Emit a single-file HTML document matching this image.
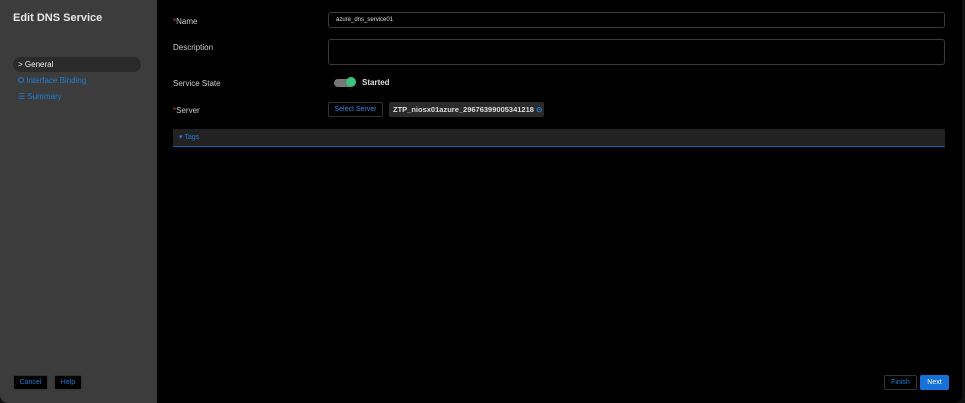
<!DOCTYPE html>
<html><head><meta charset="utf-8"><style>
*{box-sizing:border-box;margin:0;padding:0}
body{width:965px;height:403px;background:#111;font-family:"Liberation Sans",sans-serif;overflow:hidden;position:relative}
#wrap{position:absolute;left:0;top:0;width:962px;height:403px;background:#000;border-radius:0 0 8px 8px;overflow:hidden}
#side{position:absolute;left:0;top:0;width:157px;height:403px;background:#3c3c3c}
.t{position:absolute;left:13px;top:12px;color:#e8e8e8;font-size:11px;font-weight:bold}
.nav{position:absolute;left:13px;width:128px;height:15px;font-size:8px;line-height:15px;padding-left:5px;color:#1e7ed8}
.sel{background:#2a2a2a;border-radius:8px;color:#eee}
.lbl{position:absolute;left:173px;color:#ccc;font-size:8px}
.lbl b{color:#e03030;font-weight:normal}
.inp{position:absolute;left:328px;width:617px;border:1px solid #3a3a3a;border-radius:3px;background:#000;color:#ddd;font-size:6px;padding-left:7px}
.btn{position:absolute;font-size:7px;border:1px solid #333;background:#000;color:#1e7ed8;text-align:center;border-radius:2px}
</style></head><body><div id="wrap">
<div id="side">
<div class="t">Edit DNS Service</div>
<div class="nav sel" style="top:57px">&gt; General</div>
<div class="nav" style="top:73px"><span style="display:inline-block;width:6px;height:6px;border:1px solid #1e7ed8;border-radius:50%"></span> Interface Binding</div>
<div class="nav" style="top:89px">☰ Summary</div>
<div class="btn" style="left:13px;top:375px;width:35px;height:15px;line-height:13px">Cancel</div>
<div class="btn" style="left:54px;top:375px;width:28px;height:15px;line-height:13px">Help</div>
</div>
<div class="lbl" style="top:17px"><b>*</b>Name</div>
<div class="inp" style="top:12px;height:16px;line-height:14px">azure_dns_service01</div>
<div class="lbl" style="top:43px">Description</div>
<div class="inp" style="top:39px;height:26px"></div>
<div class="lbl" style="top:79px">Service State</div>
<div style="position:absolute;left:334px;top:79px;width:18px;height:8px;border-radius:4px;background:#777"></div>
<div style="position:absolute;left:346px;top:77px;width:10px;height:10px;border-radius:50%;background:#3cc47c"></div>
<div style="position:absolute;left:362px;top:78px;color:#ddd;font-size:8px;font-weight:bold">Started</div>
<div class="lbl" style="top:106px"><b>*</b>Server</div>
<div class="btn" style="left:328px;top:102px;width:55px;height:15px;line-height:13px;color:#2a8ae0">Select Server</div>
<div style="position:absolute;left:389px;top:102px;width:155px;height:15px;background:#2a2a2a;border-radius:2px;color:#ddd;font-size:7.5px;font-weight:bold;line-height:15px;padding-left:4px;white-space:nowrap">ZTP_niosx01azure_29676399005341218 <span style="color:#1e7ed8">⊙</span></div>
<div style="position:absolute;left:173px;top:129px;width:772px;height:18px;background:#222;border-bottom:1px solid #1560b0;color:#1e7ed8;font-size:7px;line-height:17px;padding-left:6px">▾ Tags</div>
<div class="btn" style="left:884px;top:375px;width:33px;height:15px;line-height:13px">Finish</div>
<div class="btn" style="left:920px;top:375px;width:29px;height:15px;line-height:13px;background:#1570d8;border-color:#1570d8;color:#fff">Next</div>
</div></body></html>
